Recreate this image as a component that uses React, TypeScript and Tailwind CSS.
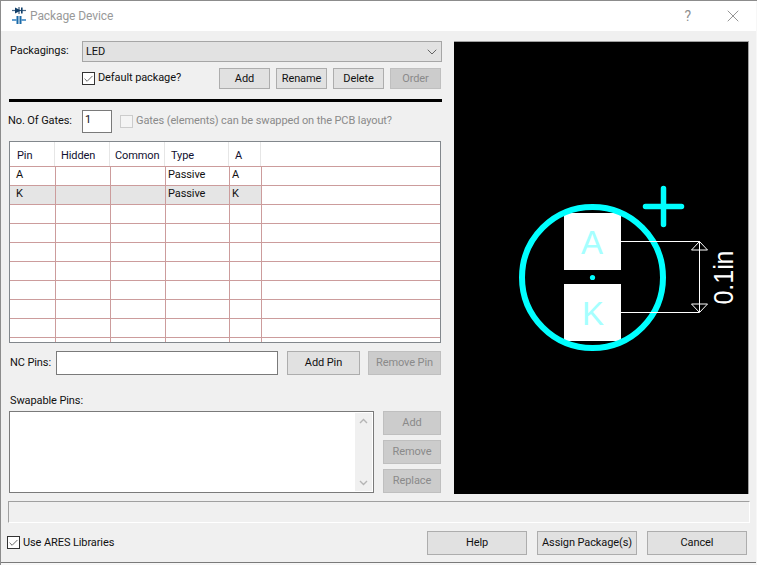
import type { ReactNode } from 'react'
import { ChevronDown, X, Check } from 'lucide-react'

const font = 'font-["Roboto","Liberation_Sans",sans-serif]'

function Btn({ children, w, h = 'h-[21px]', off }: { children: ReactNode; w: string; h?: string; off?: boolean }) {
  return (
    <div
      className={`${w} ${h} shrink-0 flex items-center justify-center whitespace-nowrap border pt-[1px] ${
        off ? 'bg-[#cccccc] border-[#bfbfbf] text-[#8a8a8a]' : 'bg-[#e1e1e1] border-[#adadad] text-[#111111]'
      }`}
    >
      {children}
    </div>
  )
}

function Tick({ checked, off }: { checked?: boolean; off?: boolean }) {
  return (
    <div
      className={`w-[13px] h-[13px] shrink-0 flex items-center justify-center border ${
        off ? 'border-[#cccccc] bg-[#f4f4f4]' : 'border-[#333333] bg-white'
      }`}
    >
      {checked && <Check className="w-[12px] h-[12px] text-[#333333]" strokeWidth={1.6} />}
    </div>
  )
}

const headColumns = ['w-[45px] pl-[7px]', 'w-[55px] pl-[6px]', 'w-[55px] pl-[5px]', 'w-[64px] pl-[6px]', 'w-[32px] pl-[6px]', 'flex-1']
const columns = ['w-[46px] pl-[6px]', 'w-[55px] pl-[2px]', 'w-[55px] pl-[2px]', 'w-[64px] pl-[2px]', 'w-[32px] pl-[2px]', 'flex-1']

const rows: string[][] = [
  ['A', '', '', 'Passive', 'A'],
  ['K', '', '', 'Passive', 'K'],
  ...Array.from({ length: 8 }, () => ['', '', '', '', '']),
]

function PinTable() {
  const head = ['Pin', 'Hidden', 'Common', 'Type', 'A', '']
  return (
    <div className="mt-[8px] ml-[8px] w-[432px] h-[202px] border border-[#82878c] bg-white overflow-hidden shrink-0">
      <div className="flex h-[24px]">
        {head.map((h, i) => (
          <div
            key={i}
            className={`${headColumns[i]} ${i === 5 ? '' : 'border-r border-[#e6e6e6]'} pt-[7px] leading-[14px] text-[#101030]`}
          >
            {h}
          </div>
        ))}
      </div>
      {rows.map((r, i) => (
        <div key={i} className="flex h-[19px] border-t border-[#cc9c9c]">
          {[...r, ''].map((c, j) => (
            <div
              key={j}
              className={`${columns[j]} ${j === 5 ? '' : 'border-r border-[#cc9c9c]'} ${
                i === 1 && j < 5 ? 'bg-[#e5e5e5]' : ''
              } leading-[15px] text-[#111111]`}
            >
              {c}
            </div>
          ))}
        </div>
      ))}
    </div>
  )
}

function LedPreview() {
  return (
    <div className="w-[295px] h-[453px] bg-black border-t border-r border-[#a0a0a0]">
      <svg width="294" height="452" viewBox="454 42 294 452" shapeRendering="crispEdges">
        <rect x="564" y="213" width="57" height="57" fill="#ffffff" />
        <rect x="564" y="284" width="57" height="57" fill="#ffffff" />
        <g shapeRendering="auto">
          <circle cx="592.5" cy="277.5" r="70.5" fill="none" stroke="#00ffff" strokeWidth="6" />
          <circle cx="592.5" cy="277.5" r="2.6" fill="#00ffff" />
          <path d="M645.5 206.5H681.5M663.5 188.5V224.5" stroke="#00ffff" strokeWidth="5.5" strokeLinecap="round" />
          <text x="592" y="254" textAnchor="middle" fontSize="33" fontFamily="Liberation Sans" fill="#a6ffff">A</text>
          <text x="593" y="325" textAnchor="middle" fontSize="33" fontFamily="Liberation Sans" fill="#a6ffff">K</text>
          <text
            x="0"
            y="0"
            transform="translate(732.5 304.5) rotate(-90)"
            fontSize="28"
            fontFamily="Liberation Sans"
            fill="#ffffff"
            textLength="54"
            lengthAdjust="spacingAndGlyphs"
          >
            0.1in
          </text>
        </g>
        <path d="M621 241.5H699M621 312.5H699M699.5 241V312" stroke="#ffffff" strokeWidth="1" fill="none" />
        <path d="M699.5 241.5L691.5 250H707.5ZM699.5 312.5L691.5 304H707.5Z" stroke="#ffffff" strokeWidth="1" fill="none" shapeRendering="auto" />
      </svg>
    </div>
  )
}

function AppIcon() {
  return (
    <svg width="16" height="18" viewBox="0 0 16 18">
      <path d="M8 0V7" stroke="#1c3c5c" strokeWidth="1" fill="none" />
      <path d="M1 3.5H15" stroke="#4a6a8a" strokeWidth="1.2" fill="none" />
      <path d="M4 0.5L10 3.5L4 6.5Z" fill="#12406a" />
      <rect x="10" y="0.5" width="1.6" height="6" fill="#12406a" />
      <path d="M1 13H5.5M10.5 13H15" stroke="#2f7fc0" strokeWidth="1.6" fill="none" />
      <rect x="5.5" y="9" width="2" height="8" fill="#1b6aa8" />
      <rect x="8.5" y="9" width="2" height="8" fill="#1b6aa8" />
    </svg>
  )
}

export default function App() {
  return (
    <div className={`w-[757px] h-[565px] bg-[#f7f7f7] overflow-hidden border-l border-[#8c8c8c] text-[11px] tracking-[-0.1px] ${font}`}>
      <div className="h-[1px] bg-[#8c8c8c]" />
      <div className="w-[755px] h-[562px] flex flex-col bg-[#f0f0f0] border-b border-[#7a7a7a]">
        {/* title bar */}
        <div className="h-[30px] shrink-0 bg-white flex items-center pl-[10px] pr-[13px]">
          <AppIcon />
          <span className="ml-[3px] text-[#999999] text-[12px]">Package Device</span>
          <span className="ml-auto text-[#8f8f8f] text-[14px] mr-[32px]">?</span>
          <X className="w-[20px] h-[20px] text-[#808080]" strokeWidth={1} />
        </div>

        <div className="flex flex-1 min-h-0">
          {/* left column */}
          <div className="w-[452px] shrink-0 flex flex-col">
            <div className="flex items-center pt-[10px] pl-[9px]">
              <span className="w-[72px] text-[#111111]">Packagings:</span>
              <div className="w-[360px] h-[21px] border border-[#a6a6a6] bg-[#e2e2e2] flex items-center pl-[3px] pr-[1px] text-[#111111]">
                <span className="pt-[1px]">LED</span>
                <ChevronDown className="ml-auto w-[16px] h-[16px] text-[#444444]" strokeWidth={1.2} />
              </div>
            </div>

            <div className="flex items-center mt-[6px] pl-[81px]">
              <Tick checked />
              <span className="ml-[3px] text-[#111111] -mt-[1px]">Default package?</span>
              <div className="ml-auto mr-[12px] flex gap-[6px]">
                <Btn w="w-[51px]">Add</Btn>
                <Btn w="w-[51px]">Rename</Btn>
                <Btn w="w-[51px]">Delete</Btn>
                <Btn w="w-[51px]" off>Order</Btn>
              </div>
            </div>

            <div className="mt-[10px] ml-[8px] w-[433px] h-[3px] shrink-0 bg-black" />

            <div className="flex items-center mt-[8px] pl-[7px]">
              <span className="w-[74px] text-[#111111] whitespace-nowrap overflow-hidden">No. Of Gates:</span>
              <div className="w-[30px] h-[23px] bg-white border border-[#7a7a7a] pl-[2px] pt-[1px] leading-[16px] text-[#111111]">1</div>
              <div className="ml-[8px]">
                <Tick off />
              </div>
              <span className="ml-[3px] text-[#8a8a8a] -mt-[1px] whitespace-nowrap">Gates (elements) can be swapped on the PCB layout?</span>
            </div>

            <PinTable />

            <div className="flex items-center mt-[8px] pl-[9px]">
              <span className="w-[46px] text-[#111111] whitespace-nowrap">NC Pins:</span>
              <div className="w-[222px] h-[24px] bg-white border border-[#7a7a7a]" />
              <div className="ml-[9px] flex gap-[8px]">
                <Btn w="w-[73px]" h="h-[24px]">Add Pin</Btn>
                <Btn w="w-[73px]" h="h-[24px]" off>Remove Pin</Btn>
              </div>
            </div>

            <div className="mt-[19px] ml-[9px] leading-[14px] text-[#111111]">Swapable Pins:</div>

            <div className="flex mt-[3px] ml-[8px]">
              <div className="w-[365px] h-[82px] bg-white border border-[#7a7a7a] flex justify-end p-[1px]">
                <div className="w-[17px] bg-[#f0f0f0] flex flex-col items-center justify-between py-[5px] text-[#b5b5b5]">
                  <svg width="9" height="6" viewBox="0 0 9 6"><path d="M1 5L4.5 1.5L8 5" stroke="currentColor" strokeWidth="1.4" fill="none" /></svg>
                  <svg width="9" height="6" viewBox="0 0 9 6"><path d="M1 1L4.5 4.5L8 1" stroke="currentColor" strokeWidth="1.4" fill="none" /></svg>
                </div>
              </div>
              <div className="ml-[9px] flex flex-col gap-[5px]">
                <Btn w="w-[58px]" h="h-[24px]" off>Add</Btn>
                <Btn w="w-[58px]" h="h-[24px]" off>Remove</Btn>
                <Btn w="w-[58px]" h="h-[24px]" off>Replace</Btn>
              </div>
            </div>
          </div>

          {/* preview */}
          <div className="pt-[10px] pl-[1px]">
            <LedPreview />
          </div>
        </div>

        {/* status strip */}
        <div className="ml-[7px] w-[742px] h-[22px] shrink-0 border-t border-l border-[#a0a0a0] border-b border-r border-b-white border-r-white" />

        {/* footer */}
        <div className="h-[39px] shrink-0 flex items-start pt-[8px] pl-[6px] pr-[9px]">
          <div className="mt-[5px]">
            <Tick checked />
          </div>
          <span className="ml-[3px] mt-[4px] text-[#111111] whitespace-nowrap">Use ARES Libraries</span>
          <div className="ml-auto flex gap-[10px]">
            <Btn w="w-[100px]" h="h-[24px]">Help</Btn>
            <Btn w="w-[100px]" h="h-[24px]">Assign Package(s)</Btn>
            <Btn w="w-[100px]" h="h-[24px]">Cancel</Btn>
          </div>
        </div>
      </div>
    </div>
  )
}
